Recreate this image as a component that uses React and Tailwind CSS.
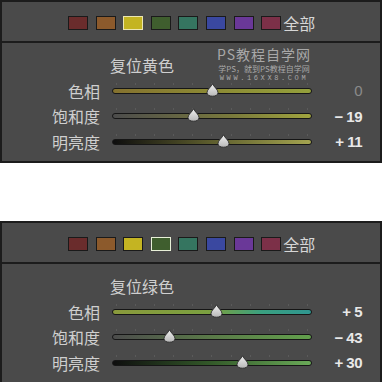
import React from "react";

const swatches = [
  "bg-[#6a2c2c]",
  "bg-[#8c5a2c]",
  "bg-[#c4b422]",
  "bg-[#3f5e2e]",
  "bg-[#357560]",
  "bg-[#3a48a0]",
  "bg-[#6a3898]",
  "bg-[#7c3048]",
];

function Thumb({ pct }) {
  return (
    <svg
      width="13"
      height="14"
      viewBox="0 0 13 14"
      className="absolute top-[-5px]"
      style={{ left: `calc(${pct}% - 6.5px)` }}
    >
      <defs>
        <linearGradient id="tg" x1="0" y1="0" x2="0" y2="1">
          <stop offset="0" stopColor="#f0f0f0" />
          <stop offset="1" stopColor="#b8b8b8" />
        </linearGradient>
      </defs>
      <path
        d="M6.5 0.8 C7.5 3.5 12 6.5 12 9.5 C12 12 9.8 13.2 6.5 13.2 C3.2 13.2 1 12 1 9.5 C1 6.5 5.5 3.5 6.5 0.8 Z"
        fill="url(#tg)"
        stroke="#2a2a2a"
        strokeWidth="0.9"
      />
    </svg>
  );
}

function Row({ label, track, value, dim }) {
  const pct = ((value + 100) / 200) * 100;
  const txt = value === 0 ? "0" : value > 0 ? `+ ${value}` : `− ${-value}`;
  return (
    <div className="flex items-center h-[25.5px]">
      <div className="w-[98px] text-right text-[16px] leading-none text-[#cfcfcf] [font-family:'Noto_Sans_CJK_SC',sans-serif]">
        {label}
      </div>
      <div className="relative ml-[12px] w-[200px] h-[6px]">
        <div className="absolute left-[4px] right-[4px] top-[-5px] flex justify-between">
          {Array.from({ length: 11 }).map((_, i) => (
            <div key={i} className="w-[1px] h-[2px] bg-[#5a5a5a]" />
          ))}
        </div>
        <div className={`absolute inset-0 rounded-full border border-[#161616] ${track}`} />
        <Thumb pct={pct} />
      </div>
      <div
        className={`w-[50px] text-right text-[15px] leading-none font-bold tracking-[-0.5px] [font-family:'Liberation_Sans',sans-serif] ${
          dim ? "text-[#8a8a8a] font-normal" : "text-[#e8e8e8]"
        }`}
      >
        {txt}
      </div>
    </div>
  );
}

function Panel({ selected, selBorder, title, rows, watermark, cls }) {
  return (
    <div className={`relative w-[382px] bg-[#4a4a4a] border-2 border-[#1c1c1c] ${cls}`}>
      <div className="h-[41px] border-b-2 border-[#1c1c1c] flex items-start pt-[14px] pl-[66px]">
        <div className="flex gap-[7.6px]">
          {swatches.map((c, i) => (
            <div
              key={i}
              className={`w-[20px] h-[14px] border ${c} ${
                i === selected ? selBorder : "border-[#1a1a1a]"
              }`}
            />
          ))}
        </div>
        <div className="ml-[2px] mt-[-2px] text-[16px] leading-[18px] text-[#d6d6d6] [font-family:'Noto_Sans_CJK_SC',sans-serif]">
          全部
        </div>
      </div>
      <div className="pt-[14px]">
        <div className="pl-[108px] h-[16px] text-[16px] leading-[16px] text-[#cfcfcf] [font-family:'Noto_Sans_CJK_SC',sans-serif]">
          {title}
        </div>
        <div className="mt-[5px]">
          {rows.map((r, i) => (
            <Row key={i} {...r} />
          ))}
        </div>
      </div>
      {watermark && (
        <div className="absolute left-[208px] top-[44px] w-[108px] flex flex-col items-center text-[#a8a8a8] [font-family:'Noto_Sans_CJK_SC',sans-serif]">
          <div className="text-[14px] leading-[16px] tracking-[1px]">PS教程自学网</div>
          <div className="text-[8px] leading-[10px] mt-[2px]">学PS，就到PS教程自学网</div>
          <div className="text-[7px] leading-[9px] tracking-[2.6px] [font-family:'Liberation_Mono',monospace]">
            WWW.16XX8.COM
          </div>
        </div>
      )}
    </div>
  );
}

export default function App() {
  return (
    <div className="w-[384px] h-[382px] bg-white overflow-hidden">
      <Panel
        selected={2}
        selBorder="border-[#ece6b0]"
        title="复位黄色"
        watermark
        cls="h-[163px]"
        rows={[
          {
            label: "色相",
            value: 0,
            dim: true,
            track: "bg-[linear-gradient(to_right,#85722f,#8c8a34_50%,#94a03c)]",
          },
          {
            label: "饱和度",
            value: -19,
            track: "bg-[linear-gradient(to_right,#4c4c4c,#7a7a3c_60%,#a0a43e)]",
          },
          {
            label: "明亮度",
            value: 11,
            track: "bg-[linear-gradient(to_right,#0e0e0e,#5e5e2e_50%,#a4a450)]",
          },
        ]}
      />
      <div className="h-[58px]" />
      <Panel
        selected={3}
        selBorder="border-[#e8f0d8]"
        title="复位绿色"
        cls="h-[165px]"
        rows={[
          {
            label: "色相",
            value: 5,
            track: "bg-[linear-gradient(to_right,#8a9a3c,#7aa040_50%,#3aa080_75%,#2f9690)]",
          },
          {
            label: "饱和度",
            value: -43,
            track: "bg-[linear-gradient(to_right,#4c4c4c,#5a7a48_50%,#62a04c)]",
          },
          {
            label: "明亮度",
            value: 30,
            track: "bg-[linear-gradient(to_right,#0e0e0e,#345a2a_50%,#6aaa58)]",
          },
        ]}
      />
    </div>
  );
}
